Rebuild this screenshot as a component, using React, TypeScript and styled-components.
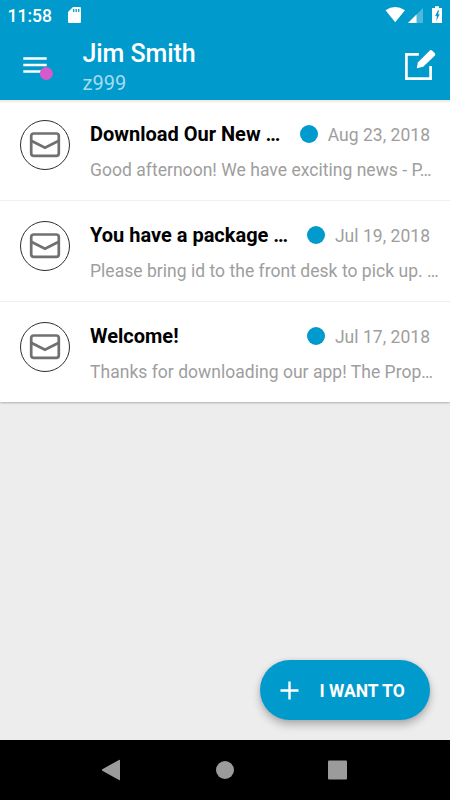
import React from 'react';
import styled, { createGlobalStyle } from 'styled-components';

const BLUE = '#019acd';

const GlobalStyle = createGlobalStyle`
  *, *::before, *::after { box-sizing: border-box; }
  body { margin: 0; font-family: Roboto, "Liberation Sans", sans-serif; }
  svg { display: block; flex: none; }
`;

const Screen = styled.div`
  display: flex;
  flex-direction: column;
  width: 450px;
  height: 800px;
  overflow: hidden;
  background: #ededed;
`;

const TopArea = styled.div`
  flex: none;
  height: 100px;
  background: ${BLUE};
  color: #fff;
`;

const StatusBar = styled.div`
  display: flex;
  height: 30px;
  padding-left: 7.5px;
`;

const Clock = styled.span`
  width: 60.5px;
  font-size: 17.5px;
  font-weight: 500;
  line-height: 32px;
`;

const StatusIcons = styled.div`
  margin-left: auto;
`;

const Header = styled.header`
  display: flex;
  height: 70px;
`;

const MenuButton = styled.button`
  width: 82px;
  height: 70px;
  padding: 0 0 0 20px;
  border: 0;
  background: none;
`;

const Identity = styled.div`
  flex: 1;
  padding: 9px 0 0 0.5px;
`;

const UserName = styled.h1`
  margin: 0;
  font-size: 25px;
  font-weight: 500;
  line-height: 30px;
  letter-spacing: -0.08px;
`;

const Unit = styled.div`
  font-size: 20px;
  line-height: 24px;
  margin-top: 2px;
  color: #a6dcee;
`;

const ComposeButton = styled.button`
  width: 50px;
  height: 70px;
  padding: 0;
  border: 0;
  background: none;
`;

const MessageList = styled.main`
  flex: none;
  height: 302px;
  background: #fff;
  box-shadow: inset 0 3px 2px -1px #eeebe9, 0 1px 2px rgba(0, 0, 0, 0.26);
`;

const Message = styled.article`
  display: flex;
  height: 100.8px;
  padding-top: 20px;
  padding-left: 20px;
  border-bottom: 1px solid #efefef;
  &:last-child {
    height: 100px;
    border-bottom: 0;
  }
`;

const Avatar = styled.div`
  width: 50px;
  height: 50px;
  margin-right: 20px;
`;

const MessageBody = styled.div`
  flex: 1;
  min-width: 0;
  white-space: nowrap;
`;

const MessageHead = styled.div`
  display: flex;
  align-items: center;
  height: 28px;
  padding-right: 20px;
`;

const Subject = styled.h2`
  flex: 1;
  margin: 0;
  font-size: 20px;
  font-weight: 700;
  line-height: 28px;
  color: #000;
`;

const UnreadDot = styled.span`
  width: 18px;
  height: 18px;
  margin-right: 10px;
  border-radius: 50%;
  background: ${BLUE};
`;

const SentDate = styled.time`
  padding-top: 2px;
  font-size: 17.5px;
  line-height: 26px;
  letter-spacing: 0.03px;
  color: #9e9e9e;
`;

const Preview = styled.p`
  margin: 9px 0 0;
  font-size: 17.5px;
  line-height: 26px;
  letter-spacing: 0.03px;
  color: #9e9e9e;
`;

const EmptyArea = styled.div`
  flex: 1;
  display: flex;
  justify-content: flex-end;
  align-items: flex-end;
  padding: 0 20px 20px;
`;

const ActionButton = styled.button`
  display: flex;
  align-items: center;
  width: 170.5px;
  height: 60px;
  padding: 0 0 0 20.5px;
  border: 0;
  border-radius: 30px;
  background: ${BLUE};
  color: #fff;
  font: 700 17.5px Roboto, sans-serif;
  white-space: nowrap;
  box-shadow: 0 5px 8px rgba(0, 0, 0, 0.25), 0 0 4px rgba(0, 0, 0, 0.1);
`;

const ActionLabel = styled.span`
  margin-left: 20.5px;
  padding-top: 1px;
`;

const NavBar = styled.nav`
  flex: none;
  display: flex;
  justify-content: center;
  height: 60px;
  background: #000;
`;

const messages = [
  { subject: 'Download Our New …', date: 'Aug 23, 2018', preview: 'Good afternoon! We have exciting news - P…' },
  { subject: 'You have a package …', date: 'Jul 19, 2018', preview: 'Please bring id to the front desk to pick up. …' },
  { subject: 'Welcome!', date: 'Jul 17, 2018', preview: 'Thanks for downloading our app! The Prop…' },
];

const SdCardIcon = () => (
  <svg width="14" height="30" viewBox="68 0 14 30">
    <path d="M73 7h6.7q1.3 0 1.3 1.3v13.4q0 1.3-1.3 1.3H69.3q-1.3 0-1.3-1.3V12z" fill="#fff" />
    <path d="M73.7 9v3M76.2 9v3M78.7 9v3" stroke={BLUE} strokeWidth="1.3" />
  </svg>
);

const SystemIcons = () => (
  <svg width="70" height="30" viewBox="380 0 70 30">
    <path d="M385.5 10.200Q395.200 3.700 405 10.200L395.200 22.300z" fill="#fff" />
    <path d="M423 8v15h-15z" fill="#fff" fillOpacity=".3" />
    <path d="M416.500 14.500V23H408z" fill="#fff" />
    <path d="M435 6.200h4V8h3v15h-10V8h3z" fill="#fff" />
    <path d="M437.900 10.300h1l-.7 4h1.500l-3.400 6.700.6-5h-1.700z" fill={BLUE} />
  </svg>
);

const MenuIcon = () => (
  <svg width="40" height="40" viewBox="20 45 40 40">
    <path d="M23.300 58.500h23.400M23.300 65h23.400M23.300 71.500h23.400" stroke="#fff" strokeWidth="2.500" />
    <circle cx="46.300" cy="73.500" r="6.500" fill="#d65acb" />
  </svg>
);

const ComposeIcon = () => (
  <svg width="50" height="70" viewBox="400 30 50 70">
    <path d="M418.800 54.400h-12.400v24.200h24.200V66" fill="none" stroke="#fff" strokeWidth="2.700" />
    <path d="M416.800 68.300l1-5.900L429.600 50.700q1.400-1.300 2.700 0l2.400 2.400q1.300 1.400 0 2.700L423.200 66.800z" fill="#fff" />
  </svg>
);

const EnvelopeIcon = () => (
  <svg width="50" height="50" viewBox="0 0 50 50">
    <circle cx="25" cy="25" r="24.500" fill="none" stroke="#222" strokeWidth=".95" />
    <rect x="11.200" y="13.500" width="27.600" height="22.400" rx="2.600" fill="none" stroke="#707070" strokeWidth="2.700" />
    <path d="M11.200 20.700l13.800 7 13.800-7" fill="none" stroke="#707070" strokeWidth="2.700" />
  </svg>
);

const PlusIcon = () => (
  <svg width="19" height="19" viewBox="0 0 19 19">
    <path d="M9.500 .5v18M.5 9.500h18" stroke="#fff" strokeWidth="2.400" />
  </svg>
);

const NavIcons = () => (
  <svg width="250" height="60" viewBox="100 740 250 60" fill="#9b9b9b">
    <path d="M102.300 769.300l16.700-9.400q1-.5 1 .6v19q0 1.100-1 .6l-16.700-9.400q-1-.7 0-1.400z" />
    <circle cx="225" cy="770" r="9" />
    <rect x="328" y="760.500" width="19" height="19" rx="1" />
  </svg>
);

export default function App() {
  return (
    <>
      <GlobalStyle />
      <Screen>
        <TopArea>
          <StatusBar>
            <Clock>11:58</Clock>
            <SdCardIcon />
            <StatusIcons><SystemIcons /></StatusIcons>
          </StatusBar>
          <Header>
            <MenuButton aria-label="Menu"><MenuIcon /></MenuButton>
            <Identity>
              <UserName>Jim Smith</UserName>
              <Unit>z999</Unit>
            </Identity>
            <ComposeButton aria-label="Compose"><ComposeIcon /></ComposeButton>
          </Header>
        </TopArea>
        <MessageList>
          {messages.map((m) => (
            <Message key={m.subject}>
              <Avatar><EnvelopeIcon /></Avatar>
              <MessageBody>
                <MessageHead>
                  <Subject>{m.subject}</Subject>
                  <UnreadDot />
                  <SentDate>{m.date}</SentDate>
                </MessageHead>
                <Preview>{m.preview}</Preview>
              </MessageBody>
            </Message>
          ))}
        </MessageList>
        <EmptyArea>
          <ActionButton><PlusIcon /><ActionLabel>I WANT TO</ActionLabel></ActionButton>
        </EmptyArea>
        <NavBar><NavIcons /></NavBar>
      </Screen>
    </>
  );
}
